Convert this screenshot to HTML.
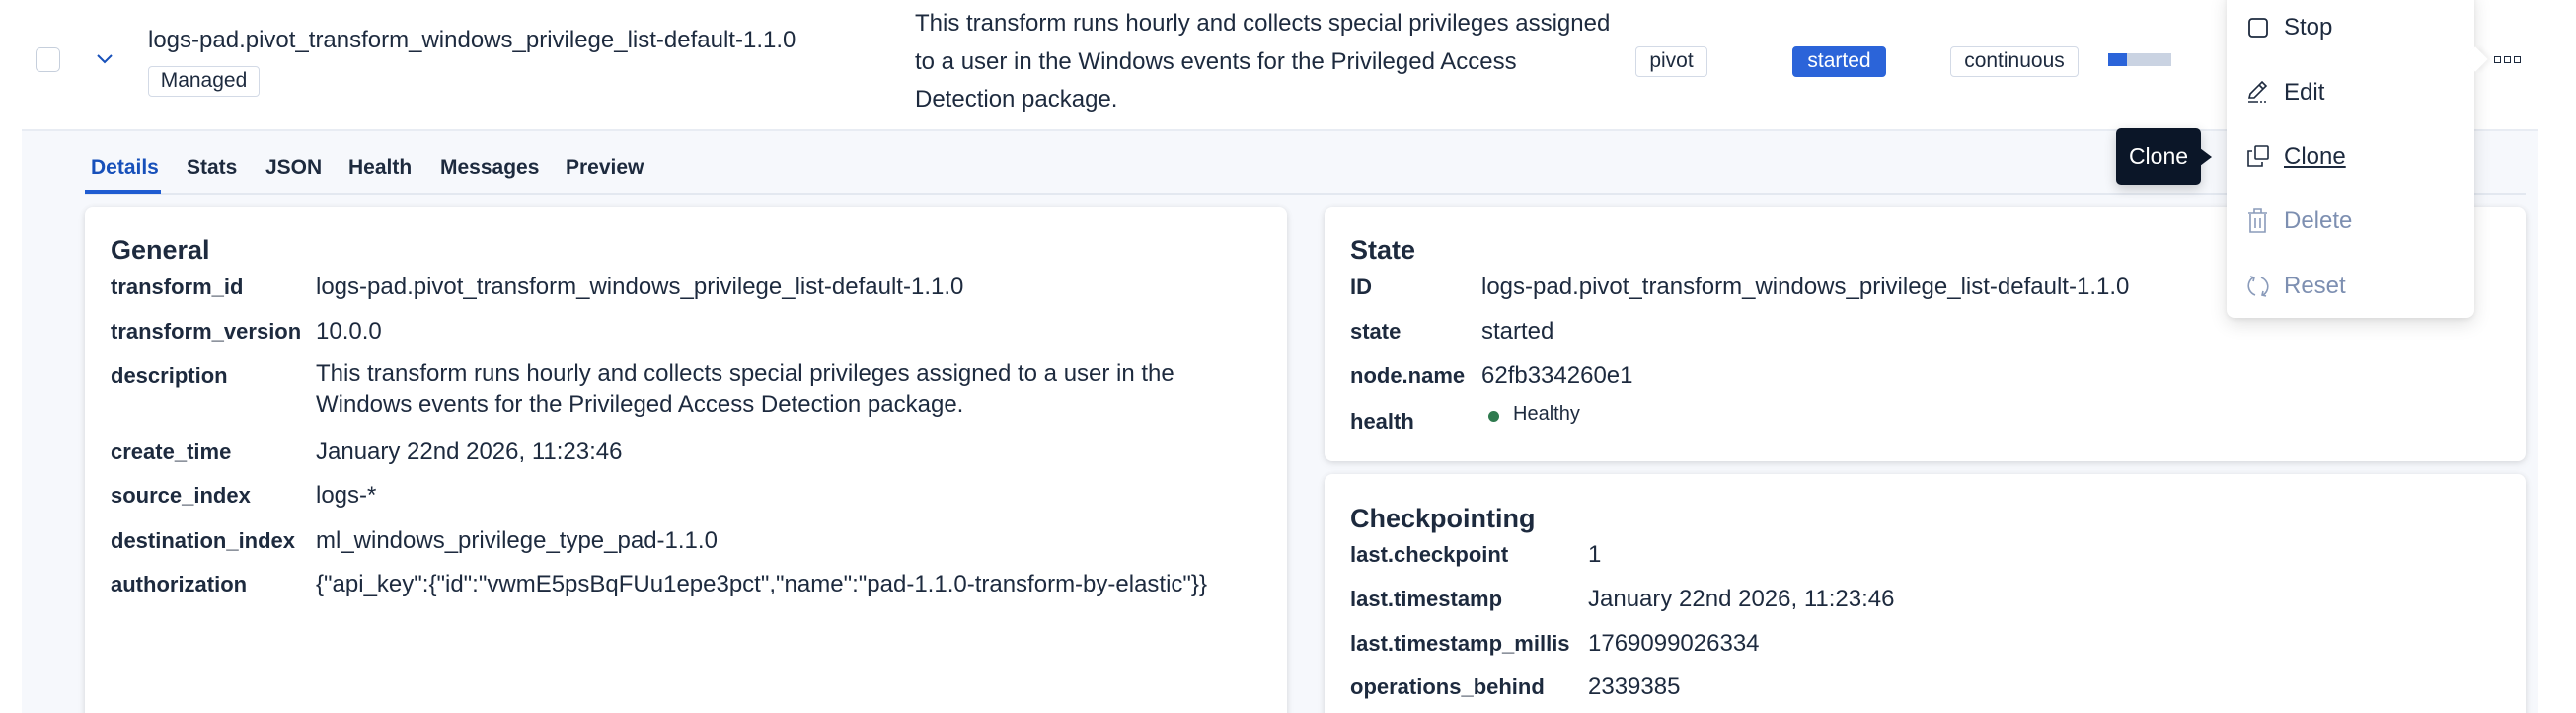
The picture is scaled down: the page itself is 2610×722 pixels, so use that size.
<!DOCTYPE html>
<html style="width:2610px;height:722px;overflow:hidden"><head><meta charset="utf-8">
<style>
*{box-sizing:border-box;margin:0;padding:0}
body{width:2610px;height:722px;overflow:hidden;background:#fff;font-family:"Liberation Sans",Arial,sans-serif;color:#1d2a3e;position:relative;font-size:24px}
.a{position:absolute;white-space:nowrap}
.badge{position:absolute;border:1.5px solid #d3dae6;border-radius:4px;background:#fff;font-size:21px;height:31px;line-height:28px;text-align:center;color:#1d2a3e}
.grey{position:absolute;left:22px;top:131px;width:2549px;height:591px;background:#f6f8fc;border-top:2px solid #e8ecf3}
.card{position:absolute;background:#fff;border-radius:8px;box-shadow:0 1px 6px rgba(0,0,0,.10),0 3px 10px rgba(0,0,0,.05)}
.h{font-weight:bold;font-size:27px}
.l{font-weight:bold;font-size:22px;margin-top:1px}
.tab{position:absolute;top:158px;font-size:21px;font-weight:bold}
.mi{position:absolute;left:2314px;font-size:24px;transform:translateY(-50%)}
</style></head><body>

<div class="a" style="left:36px;top:48px;width:25px;height:25px;border:1.5px solid #c6cfdc;border-radius:5px"></div>
<svg class="a" style="left:96px;top:52px" width="20" height="16" viewBox="0 0 20 16"><path d="M3 4 L10 11 L17 4" fill="none" stroke="#1750ba" stroke-width="2"/></svg>
<div class="a" style="left:150px;top:27px">logs-pad.pivot_transform_windows_privilege_list-default-1.1.0</div>
<div class="badge" style="left:150px;top:67px;width:113px">Managed</div>
<div class="a" style="left:927px;top:5px;line-height:38.5px">This transform runs hourly and collects special privileges assigned<br>to a user in the Windows events for the Privileged Access<br>Detection package.</div>
<div class="badge" style="left:1657px;top:47px;width:73px">pivot</div>
<div class="badge" style="left:1816px;top:47px;width:95px;background:#2b64d9;border-color:#2b64d9;color:#fff">started</div>
<div class="badge" style="left:1976px;top:47px;width:130px">continuous</div>
<div class="a" style="left:2136px;top:54px;width:64px;height:13px;background:#cad3e2"><div style="width:19px;height:13px;background:#2b64d9"></div></div>
<div class="a" style="left:2527px;top:57px;width:7px;height:7px;border:1.5px solid #1d2a3e"></div>
<div class="a" style="left:2537px;top:57px;width:7px;height:7px;border:1.5px solid #1d2a3e"></div>
<div class="a" style="left:2547px;top:57px;width:7px;height:7px;border:1.5px solid #1d2a3e"></div>

<div class="grey"></div>
<div class="tab" style="left:92px;color:#1750ba">Details</div>
<div class="tab" style="left:189px">Stats</div>
<div class="tab" style="left:269px">JSON</div>
<div class="tab" style="left:353px">Health</div>
<div class="tab" style="left:446px">Messages</div>
<div class="tab" style="left:573px">Preview</div>
<div class="a" style="left:86px;top:195px;width:2473px;height:2px;background:#e3e8f0"></div>
<div class="a" style="left:86px;top:192px;width:77px;height:4px;background:#1f5cd1"></div>

<div class="card" style="left:86px;top:210px;width:1218px;height:530px"></div>
<div class="a h" style="left:112px;top:238px">General</div>
<div class="a l" style="left:112px;top:277px">transform_id</div><div class="a" style="left:320px;top:277px">logs-pad.pivot_transform_windows_privilege_list-default-1.1.0</div>
<div class="a l" style="left:112px;top:322px">transform_version</div><div class="a" style="left:320px;top:322px">10.0.0</div>
<div class="a l" style="left:112px;top:367px">description</div><div class="a" style="left:320px;top:363px;line-height:31px">This transform runs hourly and collects special privileges assigned to a user in the<br>Windows events for the Privileged Access Detection package.</div>
<div class="a l" style="left:112px;top:444px">create_time</div><div class="a" style="left:320px;top:444px">January 22nd 2026, 11:23:46</div>
<div class="a l" style="left:112px;top:488px">source_index</div><div class="a" style="left:320px;top:488px">logs-*</div>
<div class="a l" style="left:112px;top:534px">destination_index</div><div class="a" style="left:320px;top:534px">ml_windows_privilege_type_pad-1.1.0</div>
<div class="a l" style="left:112px;top:578px">authorization</div><div class="a" style="left:320px;top:578px">{"api_key":{"id":"vwmE5psBqFUu1epe3pct","name":"pad-1.1.0-transform-by-elastic"}}</div>

<div class="card" style="left:1342px;top:210px;width:1217px;height:257px"></div>
<div class="a h" style="left:1368px;top:238px">State</div>
<div class="a l" style="left:1368px;top:277px">ID</div><div class="a" style="left:1501px;top:277px">logs-pad.pivot_transform_windows_privilege_list-default-1.1.0</div>
<div class="a l" style="left:1368px;top:322px">state</div><div class="a" style="left:1501px;top:322px">started</div>
<div class="a l" style="left:1368px;top:367px">node.name</div><div class="a" style="left:1501px;top:367px">62fb334260e1</div>
<div class="a l" style="left:1368px;top:413px">health</div>
<div class="a" style="left:1508px;top:416px;width:11px;height:11px;border-radius:50%;background:#2f7a4f"></div>
<div class="a" style="left:1533px;top:408px;font-size:20px">Healthy</div>

<div class="card" style="left:1342px;top:480px;width:1217px;height:260px"></div>
<div class="a h" style="left:1368px;top:510px">Checkpointing</div>
<div class="a l" style="left:1368px;top:548px">last.checkpoint</div><div class="a" style="left:1609px;top:548px">1</div>
<div class="a l" style="left:1368px;top:593px">last.timestamp</div><div class="a" style="left:1609px;top:593px">January 22nd 2026, 11:23:46</div>
<div class="a l" style="left:1368px;top:638px">last.timestamp_millis</div><div class="a" style="left:1609px;top:638px">1769099026334</div>
<div class="a l" style="left:1368px;top:682px">operations_behind</div><div class="a" style="left:1609px;top:682px">2339385</div>

<div class="a" style="left:2144px;top:130px;width:86px;height:57px;background:#0b1628;border-radius:5px;color:#fff;font-size:23px;line-height:57px;text-align:center;box-shadow:0 4px 12px rgba(0,0,0,.2)">Clone</div>
<div class="a" style="left:2229px;top:150px;width:0;height:0;border-top:9px solid transparent;border-bottom:9px solid transparent;border-left:12px solid #0b1628"></div>

<div class="a" style="left:2256px;top:-10px;width:251px;height:332px;background:#fff;border-radius:8px;box-shadow:0 6px 18px rgba(0,0,0,.12),0 2px 5px rgba(0,0,0,.06)"></div>
<div class="a" style="left:2499px;top:51px;width:18px;height:18px;background:#fff;transform:rotate(45deg);box-shadow:3px -3px 5px rgba(0,0,0,.05)"></div>
<svg class="a" style="left:2276px;top:16px" width="26" height="26" viewBox="0 0 26 26"><rect x="3" y="3" width="18" height="18" rx="3" fill="none" stroke="#1d2a3e" stroke-width="1.8"/></svg>
<div class="mi" style="top:28px">Stop</div>
<svg class="a" style="left:2276px;top:80px" width="26" height="26" viewBox="0 0 26 26"><path d="M3 19 L4 15 L16 3 L20 7 L8 19 Z M13 6 L17 10" fill="none" stroke="#1d2a3e" stroke-width="1.6"/><path d="M2 23 H12 M14 23 H16 M18 23 H20" stroke="#1d2a3e" stroke-width="1.6"/></svg>
<div class="mi" style="top:94px">Edit</div>
<svg class="a" style="left:2276px;top:146px" width="26" height="26" viewBox="0 0 26 26"><rect x="9" y="2" width="13" height="13" rx="1" fill="none" stroke="#1d2a3e" stroke-width="1.6"/><path d="M6 7 H2 V22 H16 V18" fill="none" stroke="#1d2a3e" stroke-width="1.6"/></svg>
<div class="mi" style="top:159px;text-decoration:underline">Clone</div>
<svg class="a" style="left:2276px;top:210px" width="26" height="28" viewBox="0 0 26 28"><path d="M4 7 V25 H19 V7 M2 6 H21 M8 6 V2 H15 V6 M9 11 V21 M14 11 V21" fill="none" stroke="#8a9bba" stroke-width="1.6"/></svg>
<div class="mi" style="top:224px;color:#7d8fb1">Delete</div>
<svg class="a" style="left:2276px;top:277px" width="26" height="26" viewBox="0 0 26 26"><path d="M7 4 A10 10 0 0 0 9 22 M17 22 A10 10 0 0 0 15 4 M4 3 L8 4 L7 8 M20 23 L16 22 L17 18" fill="none" stroke="#8a9bba" stroke-width="1.6"/></svg>
<div class="mi" style="top:290px;color:#7d8fb1">Reset</div>
</body></html>
